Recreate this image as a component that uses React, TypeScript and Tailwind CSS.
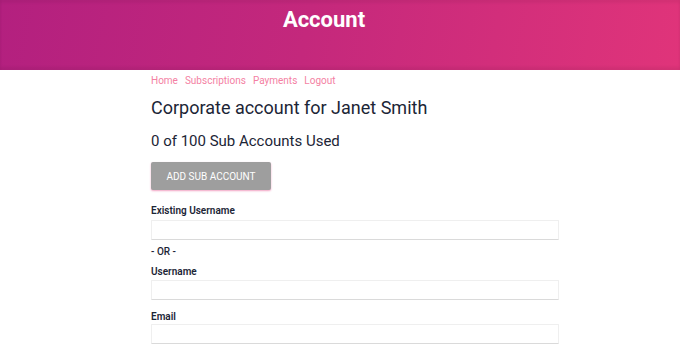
export default function App() {
  const font = { fontFamily: "Roboto, 'Liberation Sans', sans-serif" };
  return (
    <div className="w-[680px] min-h-[354px] bg-white" style={font}>
      <header className="h-[70px] bg-[linear-gradient(100deg,#b3207f_0%,#c4287c_45%,#e0347a_100%)] shadow-[inset_0_-3px_3px_rgba(0,0,0,0.06),inset_0_3px_3px_rgba(0,0,0,0.05)] flex justify-center pr-[32px]">
        <h1 className="text-white text-[22px] leading-none font-bold mt-[9px]">Account</h1>
      </header>

      <main className="ml-[151px] w-[408px] flex flex-col">
        <nav className="flex gap-[7px] text-[10px] leading-none text-[#f47fa3] mt-[6px]">
          <a>Home</a>
          <a>Subscriptions</a>
          <a>Payments</a>
          <a>Logout</a>
        </nav>

        <h2 className="text-[18px] leading-none text-[#1c2536] mt-[13px]">Corporate account for Janet Smith</h2>
        <h3 className="text-[15px] leading-none text-[#1c2536] mt-[17px]">0 of 100 Sub Accounts Used</h3>

        <button className="mt-[13px] w-[120px] h-[28px] bg-[#9e9e9e] text-white text-[10px] uppercase rounded-[2px] shadow-[0_1px_2px_rgba(224,52,122,0.45)]">
          Add Sub Account
        </button>

        <label className="mt-[16px] text-[10px] leading-none font-semibold text-[#1c2536]">Existing Username</label>
        <input className="mt-[4px] h-[20px] w-full border border-[#efefef] border-b-[#dadada] rounded-[1px] outline-none" />

        <span className="mt-[7px] text-[10px] leading-none font-medium text-[#1c2536]">- OR -</span>

        <label className="mt-[10px] text-[10px] leading-none font-semibold text-[#1c2536]">Username</label>
        <input className="mt-[3px] h-[20px] w-full border border-[#efefef] border-b-[#dadada] rounded-[1px] outline-none" />

        <label className="mt-[12px] text-[10px] leading-none font-semibold text-[#1c2536]">Email</label>
        <input className="mt-[2px] h-[20px] w-full border border-[#efefef] border-b-[#dadada] rounded-[1px] outline-none" />
      </main>
    </div>
  );
}
